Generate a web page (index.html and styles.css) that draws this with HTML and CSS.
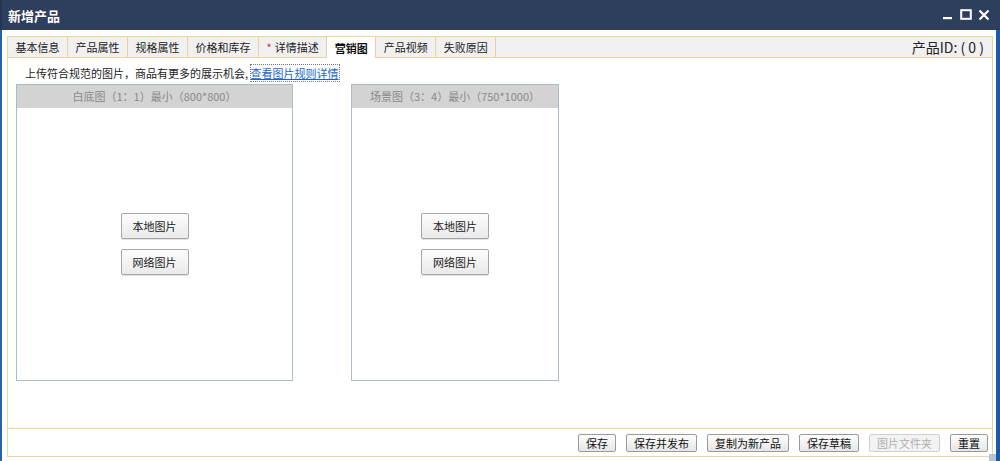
FILE: index.html
```html
<!DOCTYPE html>
<html lang="zh">
<head>
<meta charset="utf-8">
<title>新增产品</title>
<link rel="stylesheet" href="styles.css">
</head>
<body>
<div class="window">
  <div class="titlebar">
    <span class="title">新增产品</span>
    <div class="controls">
      <svg class="ctl" width="12" height="12" viewBox="0 0 12 12"><rect x="1" y="8" width="9" height="2.2" fill="#fff"/></svg>
      <svg class="ctl" width="12" height="12" viewBox="0 0 12 12"><rect x="1.2" y="1.2" width="9.6" height="8.6" fill="none" stroke="#fff" stroke-width="2"/></svg>
      <svg class="ctl" width="12" height="12" viewBox="0 0 12 12"><path d="M1.5 1.5 L10.5 10.5 M10.5 1.5 L1.5 10.5" stroke="#fff" stroke-width="2.2"/></svg>
    </div>
  </div>
  <div class="body">
    <div class="frame">
      <div class="tabbar">
        <div class="tab">基本信息</div>
        <div class="tab">产品属性</div>
        <div class="tab">规格属性</div>
        <div class="tab">价格和库存</div>
        <div class="tab"><span class="req">*</span> 详情描述</div>
        <div class="tab active">营销图</div>
        <div class="tab">产品视频</div>
        <div class="tab">失败原因</div>
        <div class="pid">产品ID: ( 0 )</div>
      </div>
      <div class="content">
        <div class="hint">上传符合规范的图片，商品有更多的展示机会, <a class="link" href="#">查看图片规则详情</a></div>
        <div class="boxes">
          <div class="box box-a">
            <div class="box-head">白底图（1：1）最小（800*800）</div>
            <div class="box-body">
              <button class="btn">本地图片</button>
              <button class="btn">网络图片</button>
            </div>
          </div>
          <div class="box box-b">
            <div class="box-head">场景图（3：4）最小（750*1000）</div>
            <div class="box-body">
              <button class="btn">本地图片</button>
              <button class="btn">网络图片</button>
            </div>
          </div>
        </div>
      </div>
      <div class="footer">
        <button class="fbtn">保存</button>
        <button class="fbtn">保存并发布</button>
        <button class="fbtn">复制为新产品</button>
        <button class="fbtn">保存草稿</button>
        <button class="fbtn disabled" disabled>图片文件夹</button>
        <button class="fbtn">重置</button>
      </div>
    </div>
    <div class="grip"></div>
  </div>
</div>
</body>
</html>
```

FILE: styles.css
```css
* { box-sizing: border-box; }
html, body { margin: 0; padding: 0; }
body {
  width: 1000px;
  height: 461px;
  overflow: hidden;
  font-family: "Noto Sans CJK SC", "Liberation Sans", sans-serif;
  font-size: 11px;
  color: #222;
  background: #fff;
}
.window {
  width: 1000px;
  height: 461px;
  display: flex;
  flex-direction: column;
}
.titlebar {
  height: 30px;
  background: #2e3e5d;
  color: #fff;
  display: flex;
  align-items: center;
  justify-content: space-between;
  padding: 0 10px 0 6px;
  border-left: 2px solid #23365a;
}
.title {
  font-size: 13px;
  font-weight: bold;
}
.controls {
  display: flex;
  gap: 6px;
  align-items: center;
}
.ctl { display: block; }
.body {
  flex: 1;
  position: relative;
  display: flex;
  border-left: 2px solid #1c63b3;
  border-right: 4px solid #1d5aa5;
  padding: 6px 3px 4px 5px;
  background: #fff;
}
.frame {
  flex: 1;
  border: 1px solid #ecd596;
  display: flex;
  flex-direction: column;
}
.tabbar {
  height: 21px;
  background: #f0f0f0;
  border-bottom: 1px solid #ecd596;
  display: flex;
  align-items: stretch;
}
.tab {
  padding: 0 7.5px;
  border-right: 1px solid #e6d19a;
  display: flex;
  align-items: center;
  font-size: 11px;
  color: #222;
  white-space: nowrap;
}
.tab .req { color: #e0262a; margin-right: 3px; }
.tab.active {
  background: #fff;
  font-weight: bold;
  margin-bottom: -1px;
  color: #111;
}
.pid {
  margin-left: auto;
  display: flex;
  align-items: center;
  font-size: 14px;
  padding-right: 8px;
  color: #222;
}
.content {
  flex: 1;
  padding: 8px 0 0 8px;
}
.hint {
  padding-left: 9px;
  line-height: 15px;
  height: 18px;
  font-size: 11px;
  color: #222;
}
.link {
  color: #1a64c8;
  text-decoration: underline;
  outline: 1px dotted #777;
  outline-offset: 0;
}
.boxes {
  display: flex;
  gap: 58px;
}
.box {
  height: 297px;
  border: 1px solid #a9bccb;
  display: flex;
  flex-direction: column;
}
.box-a { width: 277px; }
.box-b { width: 208px; }
.box-head {
  height: 23px;
  background: #d3d3d3;
  color: #8a8a8a;
  text-align: center;
  line-height: 23px;
  font-size: 11px;
}
.box-body {
  flex: 1;
  display: flex;
  flex-direction: column;
  align-items: center;
  justify-content: center;
  gap: 10px;
}
.btn {
  width: 68px;
  height: 26px;
  border: 1px solid #a6a6a6;
  border-radius: 2px;
  background: linear-gradient(#fdfdfd, #e9e9e9);
  font-family: "Noto Sans CJK SC", "Liberation Sans", sans-serif;
  font-size: 11px;
  color: #222;
  padding: 0;
  box-shadow: 0 1px 0 #e2e2e2;
}
.footer {
  height: 28px;
  border-top: 1px solid #ecd596;
  display: flex;
  justify-content: flex-end;
  align-items: center;
  gap: 10px;
  padding-right: 4px;
}
.fbtn {
  height: 18px;
  padding: 0 7px;
  border: 1px solid #9a9a9a;
  border-radius: 2px;
  background: linear-gradient(#fdfdfd, #e6e6e6);
  font-family: "Noto Sans CJK SC", "Liberation Sans", sans-serif;
  font-size: 11px;
  line-height: 16px;
  color: #111;
}
.fbtn.disabled {
  color: #b0b0b0;
  border-color: #cfcfcf;
  background: #f3f3f3;
}
.grip {
  position: absolute;
  right: 0;
  bottom: 0;
  width: 7px;
  height: 7px;
  background: radial-gradient(circle, #b8c4d0 0.8px, transparent 1px) 0 0 / 2px 2px;
}
```
